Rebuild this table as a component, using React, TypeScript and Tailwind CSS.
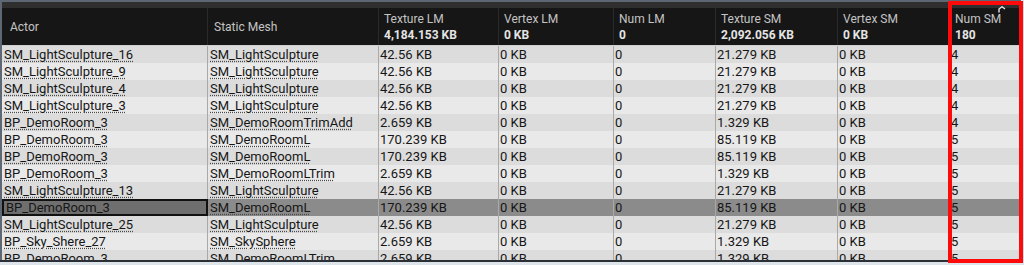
import React from "react";

type Row = {
  actor: string;
  mesh: string;
  texLM: string;
  vertLM: string;
  numLM: string;
  texSM: string;
  vertSM: string;
  numSM: string;
};

const rows: Row[] = [
  { actor: "SM_LightSculpture_16", mesh: "SM_LightSculpture", texLM: "42.56 KB", vertLM: "0 KB", numLM: "0", texSM: "21.279 KB", vertSM: "0 KB", numSM: "4" },
  { actor: "SM_LightSculpture_9", mesh: "SM_LightSculpture", texLM: "42.56 KB", vertLM: "0 KB", numLM: "0", texSM: "21.279 KB", vertSM: "0 KB", numSM: "4" },
  { actor: "SM_LightSculpture_4", mesh: "SM_LightSculpture", texLM: "42.56 KB", vertLM: "0 KB", numLM: "0", texSM: "21.279 KB", vertSM: "0 KB", numSM: "4" },
  { actor: "SM_LightSculpture_3", mesh: "SM_LightSculpture", texLM: "42.56 KB", vertLM: "0 KB", numLM: "0", texSM: "21.279 KB", vertSM: "0 KB", numSM: "4" },
  { actor: "BP_DemoRoom_3", mesh: "SM_DemoRoomTrimAdd", texLM: "2.659 KB", vertLM: "0 KB", numLM: "0", texSM: "1.329 KB", vertSM: "0 KB", numSM: "4" },
  { actor: "BP_DemoRoom_3", mesh: "SM_DemoRoomL", texLM: "170.239 KB", vertLM: "0 KB", numLM: "0", texSM: "85.119 KB", vertSM: "0 KB", numSM: "5" },
  { actor: "BP_DemoRoom_3", mesh: "SM_DemoRoomL", texLM: "170.239 KB", vertLM: "0 KB", numLM: "0", texSM: "85.119 KB", vertSM: "0 KB", numSM: "5" },
  { actor: "BP_DemoRoom_3", mesh: "SM_DemoRoomLTrim", texLM: "2.659 KB", vertLM: "0 KB", numLM: "0", texSM: "1.329 KB", vertSM: "0 KB", numSM: "5" },
  { actor: "SM_LightSculpture_13", mesh: "SM_LightSculpture", texLM: "42.56 KB", vertLM: "0 KB", numLM: "0", texSM: "21.279 KB", vertSM: "0 KB", numSM: "5" },
  { actor: "BP_DemoRoom_3", mesh: "SM_DemoRoomL", texLM: "170.239 KB", vertLM: "0 KB", numLM: "0", texSM: "85.119 KB", vertSM: "0 KB", numSM: "5" },
  { actor: "SM_LightSculpture_25", mesh: "SM_LightSculpture", texLM: "42.56 KB", vertLM: "0 KB", numLM: "0", texSM: "21.279 KB", vertSM: "0 KB", numSM: "5" },
  { actor: "BP_Sky_Shere_27", mesh: "SM_SkySphere", texLM: "2.659 KB", vertLM: "0 KB", numLM: "0", texSM: "1.329 KB", vertSM: "0 KB", numSM: "5" },
  { actor: "BP_DemoRoom_3", mesh: "SM_DemoRoomLTrim", texLM: "2.659 KB", vertLM: "0 KB", numLM: "0", texSM: "1.329 KB", vertSM: "0 KB", numSM: "5" },
];

const cols = "grid grid-cols-[206px_171px_120px_115px_102px_122px_112px_1fr]";

const headers = [
  { title: "Actor", total: "" },
  { title: "Static Mesh", total: "" },
  { title: "Texture LM", total: "4,184.153 KB" },
  { title: "Vertex LM", total: "0 KB" },
  { title: "Num LM", total: "0" },
  { title: "Texture SM", total: "2,092.056 KB" },
  { title: "Vertex SM", total: "0 KB" },
  { title: "Num SM", total: "180" },
];

const SELECTED = 9;

const App = () => {
  return (
    <div className="relative w-[1024px] h-[265px] overflow-hidden bg-[#dde4ea] font-['Roboto',sans-serif]">
      <div className="w-[1021px] h-[260px] flex flex-col border-l-2 border-t-2 border-[#5d6874] bg-[#e6e6e6]">
        <div className="h-[6px] bg-[#2f2f2f]" />

        <div className={`${cols} h-[38px] bg-[#161616] border-b border-[#cfcfcf]`}>
          {headers.map((h, i) => (
            <div
              key={h.title}
              className={`flex flex-col justify-center items-start text-[12px] leading-[16px] border-r border-[#2a2a2a] ${
                i === 0 ? "pl-[8px]" : i === 1 ? "pl-[6px]" : "pl-[5px]"
              }`}
            >
              <div className="flex items-start">
                <span className="text-[#c4c4c4]">{h.title}</span>
                {i === 7 && (
                  <svg className="ml-[-3px] mt-[-5px] shrink-0" width="8" height="7" viewBox="0 0 8 7">
                    <path d="M1 6.5 L1 3 L4 0.8 L7 3" stroke="#e8e8e8" strokeWidth="1.4" fill="none" />
                  </svg>
                )}
              </div>
              {h.total && <span className="font-bold text-[#e4e4e4]">{h.total}</span>}
            </div>
          ))}
        </div>

        <div className="flex-1 overflow-hidden">
          {rows.map((r, i) => {
            const sel = i === SELECTED;
            const bg = sel ? "bg-[#8b8b8b]" : i % 2 === 0 ? "bg-[#dcdcdc]" : "bg-[#e9e9e9]";
            const vals = [r.texLM, r.vertLM, r.numLM, r.texSM, r.vertSM, r.numSM];
            return (
              <div key={i} className={`${cols} h-[17px] ${bg} text-[13px] leading-[17px] text-[#161616]`}>
                <div
                  className={`px-[2px] whitespace-nowrap overflow-hidden ${
                    sel ? "bg-[#6f6f6f] border-2 border-[#111] leading-[13px]" : "border-r border-[#a9a9a9]"
                  }`}
                >
                  <span className="underline decoration-dotted decoration-[#4a4a4a] underline-offset-[2px]">{r.actor}</span>
                </div>
                <div className="px-[2px] whitespace-nowrap overflow-hidden border-r border-[#a9a9a9]">
                  <span className="underline decoration-dotted decoration-[#4a4a4a] underline-offset-[2px]">{r.mesh}</span>
                </div>
                {vals.map((v, j) => (
                  <div key={j} className="px-[1px] whitespace-nowrap border-r border-[#a9a9a9]">
                    {v}
                  </div>
                ))}
              </div>
            );
          })}
        </div>
      </div>
      <div className="h-[2px] w-[1021px] bg-[#2b3036]" />

      <div className="absolute left-[948px] top-[1px] w-[75px] h-[262px] border-4 border-[#ff0a0a]" />
    </div>
  );
};

export default App;
